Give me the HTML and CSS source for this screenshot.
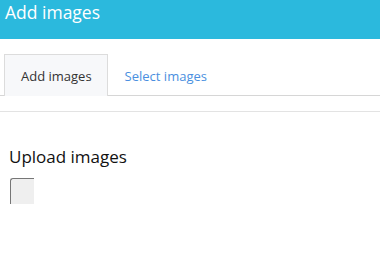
FILE: index.html
```html
<!DOCTYPE html>
<html lang="en">
<head>
    <meta charset="UTF-8">
    <meta name="viewport" content="width=device-width, initial-scale=1.0">
    <title>Add images</title>
    <link rel="stylesheet" href="styles.css">
</head>
<body>
    <div class="header">
        <h1>Add images</h1>
    </div>

    <div class="tabs">
        <a class="tab active">Add images</a>
        <a class="tab">Select images</a>
    </div>
    <div class="divider"></div>

    <div class="upload">
        <h3>Upload images</h3>
        <div class="file-btn"></div>
    </div>
</body>
</html>
```

FILE: styles.css
```css
body {
    margin: 0;
    font-family: "Open Sans", sans-serif;
    background: white;
    color: #222;
}
.header {
    background: #2bb9dd;
    height: 39px;
    padding: 0 5px;
}
.header h1 {
    margin: 0;
    color: white;
    font-size: 17.5px;
    font-weight: normal;
    line-height: 24px;
}
.tabs {
    display: flex;
    margin-top: 15px;
    padding-left: 4px;
    border-bottom: 1px solid #d6d6d6;
    height: 41px;
}
.tab {
    display: flex;
    align-items: center;
    padding: 0 15px 0 16px;
    font-size: 13px;
    color: #4a8fe0;
    border: 1px solid transparent;
    border-bottom: none;
    margin-bottom: -1px;
    cursor: pointer;
}
.tab.active {
    color: #333;
    background: #f7f8fa;
    border-color: #dcdcdc;
}
.divider {
    margin-top: 15px;
    border-top: 1px solid #e3e3e3;
}
.upload {
    padding: 0 9px;
}
.upload h3 {
    margin: 33px 0 10px;
    font-size: 17px;
    font-weight: normal;
    color: #111;
}
.file-btn {
    margin-left: 1px;
    width: 23px;
    height: 25px;
    background: #efefef;
    border-left: 1px solid #767676;
    border-top: 1px solid #767676;
    border-top-left-radius: 3px;
}
```
